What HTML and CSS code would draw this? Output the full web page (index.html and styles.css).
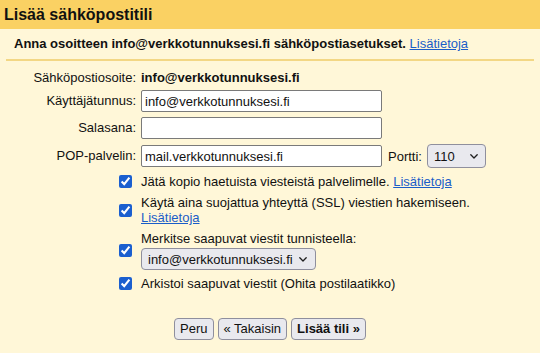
FILE: index.html
```html
<!DOCTYPE html>
<html lang="fi">
<head>
<meta charset="utf-8">
<title>Lisää sähköpostitili</title>
<link rel="stylesheet" href="styles.css">
</head>
<body>
<div class="header">Lisää sähköpostitili</div>
<div class="main">
  <div class="info">Anna osoitteen info@verkkotunnuksesi.fi sähköpostiasetukset. <a href="#" class="link">Lisätietoja</a></div>

  <div class="fields">
    <div class="label first">Sähköpostiosoite:</div>
    <div class="value first">info@verkkotunnuksesi.fi</div>

    <label class="label" for="user">Käyttäjätunnus:</label>
    <div><input id="user" class="text-input" type="text" value="info@verkkotunnuksesi.fi"></div>

    <label class="label" for="pass">Salasana:</label>
    <div><input id="pass" class="text-input" type="password" value=""></div>

    <label class="label" for="pop">POP-palvelin:</label>
    <div class="pop-row">
      <input id="pop" class="text-input" type="text" value="mail.verkkotunnuksesi.fi">
      <label class="port-label" for="port">Portti:</label>
      <span class="select port-select">
        <select id="port"><option>110</option><option>995</option></select>
        <svg class="chev" viewBox="0 0 8 5" width="8" height="5"><polyline points="0.8,0.8 4,4 7.2,0.8" fill="none" stroke="#1f1f1f" stroke-width="1.3" stroke-linecap="round" stroke-linejoin="round"/></svg>
      </span>
    </div>
  </div>

  <div class="options">
    <input class="check" type="checkbox" checked id="c1">
    <label class="opt-text" for="c1">Jätä kopio haetuista viesteistä palvelimelle. <a href="#" class="link">Lisätietoja</a></label>

    <input class="check" type="checkbox" checked id="c2">
    <label class="opt-text" for="c2">Käytä aina suojattua yhteyttä (SSL) viestien hakemiseen. <a href="#" class="link">Lisätietoja</a></label>

    <input class="check" type="checkbox" checked id="c3">
    <div class="opt-text opt-stack">
      <label for="c3">Merkitse saapuvat viestit tunnisteella:</label>
      <span class="select label-select">
        <select><option>info@verkkotunnuksesi.fi</option></select>
        <svg class="chev" viewBox="0 0 8 5" width="8" height="5"><polyline points="0.8,0.8 4,4 7.2,0.8" fill="none" stroke="#1f1f1f" stroke-width="1.3" stroke-linecap="round" stroke-linejoin="round"/></svg>
      </span>
    </div>

    <input class="check" type="checkbox" checked id="c4">
    <label class="opt-text" for="c4">Arkistoi saapuvat viestit (Ohita postilaatikko)</label>
  </div>

  <div class="buttons">
    <button class="btn" type="button">Peru</button>
    <button class="btn" type="button">« Takaisin</button>
    <button class="btn btn-primary" type="button">Lisää tili »</button>
  </div>
</div>
</body>
</html>
```
FILE: styles.css
```css
html, body {
  margin: 0;
  padding: 0;
}
body {
  background: #fff7d8;
  color: #111;
  font-family: "Liberation Sans", Arial, sans-serif;
  font-size: 13px;
  line-height: 15px;
  width: 540px;
  height: 353px;
  overflow: hidden;
}
.header {
  background: #fad163;
  height: 29px;
  line-height: 29px;
  padding-left: 4px;
  font-size: 16px;
  font-weight: bold;
  color: #111;
}
.main {
  margin: 0 6px;
}
.info {
  padding: 7px 8px 8px;
  font-weight: bold;
  border-bottom: 2px solid #f3d784;
}
.link {
  color: #1a5dc8;
  text-decoration: underline;
  font-weight: normal;
}
.fields {
  display: grid;
  grid-template-columns: 130px 1fr;
  column-gap: 5px;
  row-gap: 5px;
  align-items: center;
  padding-top: 8px;
}
.label {
  text-align: right;
  line-height: 16px;
}
.value {
  font-weight: bold;
  line-height: 16px;
}
.first {
  padding-top: 1px;
  margin-bottom: -1px;
}
.text-input {
  box-sizing: border-box;
  width: 241px;
  height: 22px;
  margin: 0;
  padding: 0 3px;
  border: 1px solid #7a7a7a;
  border-radius: 2px;
  background: #fff;
  font-family: inherit;
  font-size: 13px;
  color: #111;
  display: block;
}
.pop-row {
  display: flex;
  align-items: center;
}
.port-label {
  margin-left: 6px;
  margin-right: 5px;
}
.select {
  position: relative;
  display: inline-block;
}
.select select {
  appearance: none;
  -webkit-appearance: none;
  box-sizing: border-box;
  width: 100%;
  margin: 0;
  padding: 0 0 0 6px;
  border: 1px solid #8f8f9d;
  border-radius: 4px;
  background: #e9e9ee;
  font-family: inherit;
  font-size: 13px;
  color: #111;
  display: block;
}
.port-select {
  width: 59px;
}
.port-select select {
  height: 24px;
}
.label-select {
  width: 175px;
}
.label-select select {
  height: 22px;
}
.chev {
  position: absolute;
  top: 50%;
  margin-top: -2px;
  pointer-events: none;
}
.port-select .chev {
  right: 8px;
}
.label-select .chev {
  right: 9px;
}
.options {
  display: grid;
  grid-template-columns: 130px 1fr;
  column-gap: 5px;
  row-gap: 6px;
  align-items: center;
  margin-top: 6px;
}
.opt-text {
  max-width: 365px;
}
.check {
  justify-self: end;
  width: 13px;
  height: 13px;
  margin: 0 4px 0 0;
  accent-color: #1b5fcf;
}
.opt-stack {
  display: flex;
  flex-direction: column;
  align-items: flex-start;
  gap: 2px;
}
.buttons {
  display: flex;
  justify-content: center;
  gap: 4px;
  margin-top: 27px;
}
.btn {
  box-sizing: border-box;
  height: 22px;
  margin: 0;
  padding: 0 5px;
  border: 1px solid #8f8f9d;
  border-radius: 4px;
  background: #e9e9ee;
  font-family: inherit;
  font-size: 13px;
  color: #111;
  line-height: 20px;
}
.btn-primary {
  font-weight: bold;
}
```
